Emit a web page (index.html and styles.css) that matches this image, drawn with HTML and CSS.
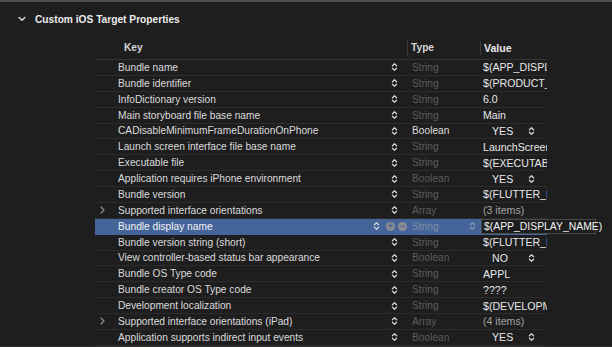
FILE: index.html
```html
<!DOCTYPE html>
<html lang="en">
<head>
    <meta charset="UTF-8">
    <meta name="viewport" content="width=device-width, initial-scale=1.0">
    <title>Custom iOS Target Properties</title>
    <link rel="stylesheet" href="styles.css">
</head>
<body>
    <svg width="0" height="0" class="defs">
        <symbol id="stepper" viewBox="0 0 7 10">
            <path d="M1.4 3.8 L3.5 1.7 L5.6 3.8 M1.4 6.2 L3.5 8.3 L5.6 6.2" fill="none" stroke="currentColor" stroke-width="1.3" stroke-linecap="round" stroke-linejoin="round"/>
        </symbol>
        <symbol id="disclose" viewBox="0 0 5 8">
            <path d="M1 1 L4 4 L1 7" fill="none" stroke="currentColor" stroke-width="1.2" stroke-linecap="round" stroke-linejoin="round"/>
        </symbol>
    </svg>

    <div class="page">
        <div class="section-title">
            <svg class="chevron-down" viewBox="0 0 8 6"><path d="M1.2 1.5 L4 4.3 L6.8 1.5" fill="none" stroke="currentColor" stroke-width="1.5" stroke-linecap="round" stroke-linejoin="round"/></svg>
            <span>Custom iOS Target Properties</span>
        </div>

        <div class="plist">
            <div class="thead">
                <div class="col-key">Key</div>
                <div class="col-type">Type</div>
                <div class="col-value">Value</div>
            </div>

            <div class="row">
                <div class="col-key"><span class="disc"></span><span class="name">Bundle name</span><svg class="stepper"><use href="#stepper"/></svg></div>
                <div class="col-type dim">String</div>
                <div class="col-value">$(APP_DISPLAY_NAME)</div>
            </div>
            <div class="row">
                <div class="col-key"><span class="disc"></span><span class="name">Bundle identifier</span><svg class="stepper"><use href="#stepper"/></svg></div>
                <div class="col-type dim">String</div>
                <div class="col-value">$(PRODUCT_BUNDLE_IDENTIFIER)</div>
            </div>
            <div class="row">
                <div class="col-key"><span class="disc"></span><span class="name">InfoDictionary version</span><svg class="stepper"><use href="#stepper"/></svg></div>
                <div class="col-type dim">String</div>
                <div class="col-value">6.0</div>
            </div>
            <div class="row">
                <div class="col-key"><span class="disc"></span><span class="name">Main storyboard file base name</span><svg class="stepper"><use href="#stepper"/></svg></div>
                <div class="col-type dim">String</div>
                <div class="col-value">Main</div>
            </div>
            <div class="row">
                <div class="col-key"><span class="disc"></span><span class="name">CADisableMinimumFrameDurationOnPhone</span><svg class="stepper"><use href="#stepper"/></svg></div>
                <div class="col-type">Boolean</div>
                <div class="col-value popup"><span>YES</span><svg class="stepper"><use href="#stepper"/></svg></div>
            </div>
            <div class="row">
                <div class="col-key"><span class="disc"></span><span class="name">Launch screen interface file base name</span><svg class="stepper"><use href="#stepper"/></svg></div>
                <div class="col-type dim">String</div>
                <div class="col-value">LaunchScreen</div>
            </div>
            <div class="row">
                <div class="col-key"><span class="disc"></span><span class="name">Executable file</span><svg class="stepper"><use href="#stepper"/></svg></div>
                <div class="col-type dim">String</div>
                <div class="col-value">$(EXECUTABLE_NAME)</div>
            </div>
            <div class="row">
                <div class="col-key"><span class="disc"></span><span class="name">Application requires iPhone environment</span><svg class="stepper"><use href="#stepper"/></svg></div>
                <div class="col-type dim">Boolean</div>
                <div class="col-value popup"><span>YES</span><svg class="stepper"><use href="#stepper"/></svg></div>
            </div>
            <div class="row">
                <div class="col-key"><span class="disc"></span><span class="name">Bundle version</span><svg class="stepper"><use href="#stepper"/></svg></div>
                <div class="col-type dim">String</div>
                <div class="col-value">$(FLUTTER_BUILD_NUMBER)</div>
            </div>
            <div class="row">
                <div class="col-key"><span class="disc"><svg><use href="#disclose"/></svg></span><span class="name">Supported interface orientations</span><svg class="stepper"><use href="#stepper"/></svg></div>
                <div class="col-type dim">Array</div>
                <div class="col-value muted">(3 items)</div>
            </div>
            <div class="row selected">
                <div class="col-key"><span class="disc"></span><span class="name">Bundle display name</span>
                    <svg class="stepper"><use href="#stepper"/></svg>
                    <span class="round-btn">+</span>
                    <span class="round-btn">&minus;</span>
                </div>
                <div class="col-type dim">String<svg class="stepper"><use href="#stepper"/></svg></div>
                <div class="col-value editing"><span class="edit-field">$(APP_DISPLAY_NAME)</span></div>
            </div>
            <div class="row">
                <div class="col-key"><span class="disc"></span><span class="name">Bundle version string (short)</span><svg class="stepper"><use href="#stepper"/></svg></div>
                <div class="col-type dim">String</div>
                <div class="col-value">$(FLUTTER_BUILD_NAME)</div>
            </div>
            <div class="row">
                <div class="col-key"><span class="disc"></span><span class="name">View controller-based status bar appearance</span><svg class="stepper"><use href="#stepper"/></svg></div>
                <div class="col-type dim">Boolean</div>
                <div class="col-value popup"><span>NO</span><svg class="stepper"><use href="#stepper"/></svg></div>
            </div>
            <div class="row">
                <div class="col-key"><span class="disc"></span><span class="name">Bundle OS Type code</span><svg class="stepper"><use href="#stepper"/></svg></div>
                <div class="col-type dim">String</div>
                <div class="col-value">APPL</div>
            </div>
            <div class="row">
                <div class="col-key"><span class="disc"></span><span class="name">Bundle creator OS Type code</span><svg class="stepper"><use href="#stepper"/></svg></div>
                <div class="col-type dim">String</div>
                <div class="col-value">????</div>
            </div>
            <div class="row">
                <div class="col-key"><span class="disc"></span><span class="name">Development localization</span><svg class="stepper"><use href="#stepper"/></svg></div>
                <div class="col-type dim">String</div>
                <div class="col-value">$(DEVELOPMENT_LANGUAGE)</div>
            </div>
            <div class="row">
                <div class="col-key"><span class="disc"><svg><use href="#disclose"/></svg></span><span class="name">Supported interface orientations (iPad)</span><svg class="stepper"><use href="#stepper"/></svg></div>
                <div class="col-type dim">Array</div>
                <div class="col-value muted">(4 items)</div>
            </div>
            <div class="row">
                <div class="col-key"><span class="disc"></span><span class="name">Application supports indirect input events</span><svg class="stepper"><use href="#stepper"/></svg></div>
                <div class="col-type dim">Boolean</div>
                <div class="col-value popup"><span>YES</span><svg class="stepper"><use href="#stepper"/></svg></div>
            </div>
        </div>
        <div class="section-end"></div>
    </div>
</body>
</html>
```

FILE: styles.css
```css
body {
    margin: 0;
    background-color: #1e1e1f;
    color: #dcdcdc;
    font-family: 'Liberation Sans', Arial, sans-serif;
    font-size: 10.2px;
    overflow: hidden;
}
.defs {
    position: absolute;
}
.page {
    border-top: 2px solid #4f4f51;
}
.section-title {
    height: 34px;
    display: flex;
    align-items: center;
    padding-left: 18px;
    font-weight: bold;
    color: #ececec;
}
.chevron-down {
    width: 8px;
    height: 6px;
    margin-right: 9px;
    color: #d8d8d8;
}
.plist {
    margin-left: 95px;
    width: 452px;
}
.thead {
    display: flex;
    height: 23px;
    align-items: center;
    border-bottom: 1px solid #333335;
    font-weight: bold;
    color: #d6d6d6;
}
.thead .col-key {
    padding-left: 29px;
}
.thead .col-type,
.thead .col-value {
    border-left: 1px solid #3a3a3c;
    height: 14px;
    line-height: 14px;
}
.thead .col-type {
    padding-left: 3px;
}
.thead .col-value {
    padding-left: 3px;
}
.col-key {
    width: 312px;
    flex: none;
    box-sizing: border-box;
    display: flex;
    align-items: center;
}
.col-type {
    width: 73px;
    flex: none;
    box-sizing: border-box;
    padding-left: 5px;
    display: flex;
    align-items: center;
}
.col-value {
    width: 67px;
    flex: none;
    box-sizing: border-box;
    padding-left: 3px;
    overflow: hidden;
    white-space: nowrap;
    color: #e8e8e8;
    font-size: 10.6px;
}
.row {
    display: flex;
    align-items: center;
    height: 15.88px;
    box-sizing: border-box;
    border-bottom: 1px solid #2c2c2e;
}
.disc {
    width: 23px;
    flex: none;
    display: flex;
    align-items: center;
    padding-left: 5px;
    box-sizing: border-box;
    color: #8c8c8e;
}
.disc svg {
    width: 5px;
    height: 8px;
}
.name {
    flex: 1;
    white-space: nowrap;
}
.stepper {
    width: 7px;
    height: 10px;
    flex: none;
    color: #d0d0d2;
}
.col-key .stepper {
    margin-right: 9px;
}
.dim {
    color: #5c5c5e;
}
.muted {
    color: #a2a2a4;
}
.popup {
    display: flex;
    align-items: center;
    padding-left: 12px;
}
.popup span {
    width: 36px;
}
.selected {
    background-color: #45659a;
    border-bottom-color: #45659a;
}
.selected .name {
    color: #f2f2f2;
}
.selected .col-key .stepper {
    margin-right: 3px;
}
.round-btn {
    width: 9px;
    height: 9px;
    border-radius: 50%;
    background-color: #8a8c92;
    color: #45659a;
    font-size: 9px;
    font-weight: bold;
    line-height: 9px;
    text-align: center;
    margin-left: 3px;
    flex: none;
}
.selected .col-type {
    color: #7d8ca6;
    justify-content: space-between;
    padding-right: 4px;
}
.selected .col-type .stepper {
    color: #8595b0;
}
.editing {
    overflow: visible;
    padding-left: 1px;
}
.edit-field {
    display: block;
    width: 115px;
    height: 15px;
    line-height: 14px;
    box-sizing: border-box;
    padding-left: 2px;
    background-color: #1e1e1f;
    border: 1px solid #4a4a4c;
    color: #f2f2f2;
    font-size: 10.4px;
}
.section-end {
    border-top: 1px solid #2c2c2e;
}
```
